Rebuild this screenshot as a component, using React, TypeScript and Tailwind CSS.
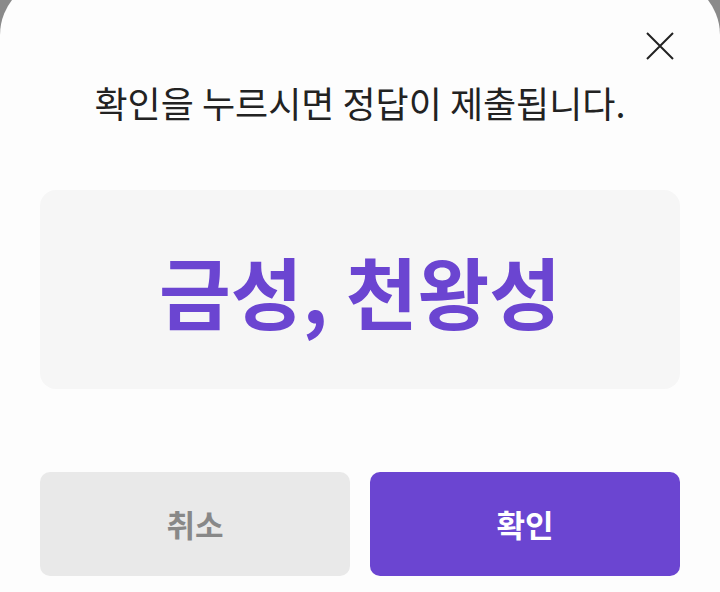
import React from "react";

export default function App() {
  return (
    <div className="w-[720px] h-[592px] overflow-hidden bg-[#8a8a8a]" style={{ fontFamily: '"Noto Sans CJK KR", "Noto Sans", sans-serif' }}>
      <div className="-mt-[22px] h-[640px] bg-[#fdfdfd] rounded-t-[57px] pt-[22px] px-[40px] flex flex-col">
        <div className="flex justify-end h-[60px] items-end pr-[6px]">
          <svg width="28" height="28" viewBox="0 0 28 28" fill="none" stroke="#222" strokeWidth="2">
            <path d="M1 1 L27 27 M27 1 L1 27" />
          </svg>
        </div>
        <p className="text-center text-[36px] leading-[44px] text-[#222] mt-[20px]">확인을 누르시면 정답이 제출됩니다.</p>
        <div className="mt-[66px] h-[199px] rounded-[16px] bg-[#f6f6f6] flex items-center justify-center">
          <span className="text-[78px] font-bold text-[#6b45d1] leading-none">금성, 천왕성</span>
        </div>
        <div className="mt-[83px] flex gap-[20px]">
          <button className="flex-1 h-[104px] rounded-[10px] bg-[#e9e9e9] text-[#888] text-[31px] font-bold">취소</button>
          <button className="flex-1 h-[104px] rounded-[10px] bg-[#6b45d1] text-white text-[31px] font-bold">확인</button>
        </div>
      </div>
    </div>
  );
}
